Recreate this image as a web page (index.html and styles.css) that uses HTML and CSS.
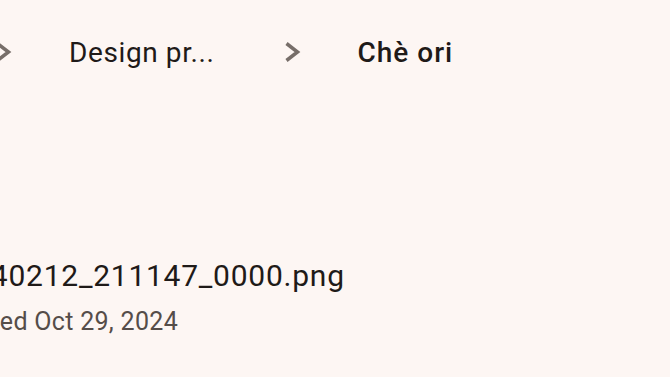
FILE: index.html
```html
<!DOCTYPE html>
<html lang="en">
<head>
<meta charset="utf-8">
<link rel="stylesheet" href="styles.css">
</head>
<body>
<main class="page">
  <nav class="crumbs">
    <span class="sep"><svg viewBox="0 0 18 22" width="18" height="22"><path d="M2.5 2.5 L13.5 11 L2.5 19.5" fill="none" stroke="currentColor" stroke-width="3.5"/></svg></span>
    <span class="crumb">Design pr...</span>
    <span class="sep"><svg viewBox="0 0 18 22" width="18" height="22"><path d="M2.5 2.5 L13.5 11 L2.5 19.5" fill="none" stroke="currentColor" stroke-width="3.5"/></svg></span>
    <span class="crumb current">Chè ori</span>
  </nav>
  <section class="file">
    <div class="name">20240212_211147_0000.png</div>
    <div class="meta">Modified Oct 29, 2024</div>
  </section>
</main>
</body>
</html>
```
FILE: styles.css
```css
html, body {
  margin: 0;
  padding: 0;
  background: #fdf6f3;
  overflow: hidden;
}
.page {
  width: 670px;
  height: 377px;
  font-family: Roboto, "Noto Sans", sans-serif;
  color: #1f1a18;
}
.crumbs {
  display: flex;
  align-items: center;
  height: 40px;
  padding-top: 32px;
  margin-left: -5px;
  white-space: nowrap;
}
.sep {
  display: flex;
  color: #776e69;
  margin-right: 56px;
}
.crumb {
  font-size: 28px;
  letter-spacing: 0.6px;
  margin-right: 69px;
}
.crumb.current {
  font-weight: 500;
  letter-spacing: 1px;
  margin-right: 0;
}
.file {
  margin-top: 186px;
  margin-left: -62px;
  white-space: nowrap;
}
.name {
  font-size: 30px;
  line-height: 36px;
  letter-spacing: 0.75px;
}
.meta {
  font-size: 25px;
  line-height: 32px;
  letter-spacing: 0.3px;
  color: #554d49;
  margin-top: 12px;
  margin-left: -11px;
}
```
